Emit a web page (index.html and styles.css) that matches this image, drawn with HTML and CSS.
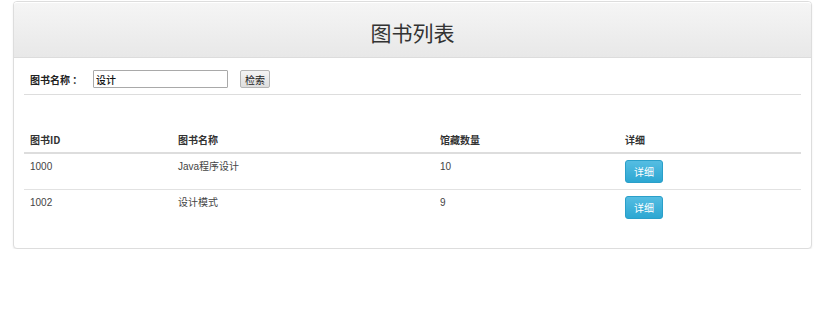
FILE: index.html
```html
<!DOCTYPE html>
<html lang="zh">
<head>
<meta charset="utf-8">
<title>图书列表</title>
<link rel="stylesheet" href="styles.css">
</head>
<body>
<div class="panel">
  <div class="panel-heading">
    <h3 class="panel-title">图书列表</h3>
  </div>
  <div class="panel-body">
    <form class="search">
      <label class="search-label">图书名称 ：</label>
      <input class="search-input" type="text" value="设计">
      <button class="search-btn" type="button">检索</button>
    </form>
    <table class="books">
      <thead>
        <tr>
          <th class="col-id">图书ID</th>
          <th class="col-name">图书名称</th>
          <th class="col-count">馆藏数量</th>
          <th class="col-detail">详细</th>
        </tr>
      </thead>
      <tbody>
        <tr>
          <td>1000</td>
          <td>Java程序设计</td>
          <td>10</td>
          <td><button class="btn-info" type="button">详细</button></td>
        </tr>
        <tr>
          <td>1002</td>
          <td>设计模式</td>
          <td>9</td>
          <td><button class="btn-info" type="button">详细</button></td>
        </tr>
      </tbody>
    </table>
  </div>
</div>
</body>
</html>
```

FILE: styles.css
```css
* { box-sizing: border-box; }
html, body { margin: 0; padding: 0; background: #fff; }
body {
  font-family: "Liberation Sans", "Noto Sans CJK SC", sans-serif;
  font-size: 10px;
  color: #333;
  padding: 1px 0 0 13px;
}
.panel {
  width: 799px;
  border: 1px solid #ddd;
  border-radius: 4px;
  box-shadow: 0 1px 2px rgba(0,0,0,.08);
  background: #fff;
}
.panel-heading {
  height: 56px;
  background: linear-gradient(#f5f5f5, #e8e8e8);
  border-top: 1px solid #fff;
  border-bottom: 1px solid #dcdcdc;
  border-radius: 3px 3px 0 0;
  display: flex;
  align-items: center;
  justify-content: center;
}
.panel-title {
  margin: 0;
  font-family: "Noto Sans CJK SC", "Liberation Sans", sans-serif;
  font-weight: 400;
  font-size: 21px;
  line-height: 24px;
  color: #333;
  padding-top: 4px;
}
.panel-body {
  padding: 12px 10px 23px 10px;
}
.search {
  margin: 0;
  display: flex;
  align-items: center;
  height: 18px;
  padding-left: 6px;
  margin-bottom: 6px;
}
.search-label {
  font-family: "Noto Sans CJK SC", sans-serif;
  font-weight: 700;
  font-size: 10px;
  width: 63px;
  color: #222;
}
.search-input {
  width: 135px;
  height: 18px;
  border: 1px solid #a9a9a9;
  border-radius: 1px;
  padding: 0 2px;
  font-family: "Noto Sans CJK SC", sans-serif;
  font-size: 10px;
  font-weight: 500;
  color: #111;
  margin: 0;
}
.search-btn {
  margin: 0 0 0 12px;
  width: 30px;
  height: 18px;
  padding: 0;
  border: 1px solid #b5b5b5;
  border-radius: 2px;
  background: linear-gradient(#f4f4f4, #dedede);
  font-family: "Noto Sans CJK SC", sans-serif;
  font-size: 10px;
  color: #222;
}
.books {
  width: 100%;
  border-collapse: collapse;
  border-top: 1px solid #ddd;
  margin-top: 0;
}
.books th, .books td {
  text-align: left;
  vertical-align: top;
  font-size: 10px;
  line-height: 14px;
}
.books th {
  font-family: "Noto Sans CJK SC", "Liberation Sans", sans-serif;
  font-weight: 700;
  color: #333;
  padding: 38px 6px 5px 6px;
  border-bottom: 2px solid #ddd;
}
.books td {
  padding: 6px 6px 6px 6px;
  height: 35px;
  border-bottom: 1px solid #e2e2e2;
  color: #444;
}
.books tbody tr:last-child td { border-bottom: none; }
.col-id { width: 148px; }
.col-name { width: 262px; }
.col-count { width: 185px; }
.btn-info {
  display: block;
  margin-top: 0;
  width: 38px;
  height: 23px;
  padding: 0;
  border: 1px solid #2a9fc9;
  border-radius: 3px;
  background: linear-gradient(#55bde2, #2ca7d2);
  color: #fff;
  font-family: "Noto Sans CJK SC", sans-serif;
  font-size: 10px;
}
```
